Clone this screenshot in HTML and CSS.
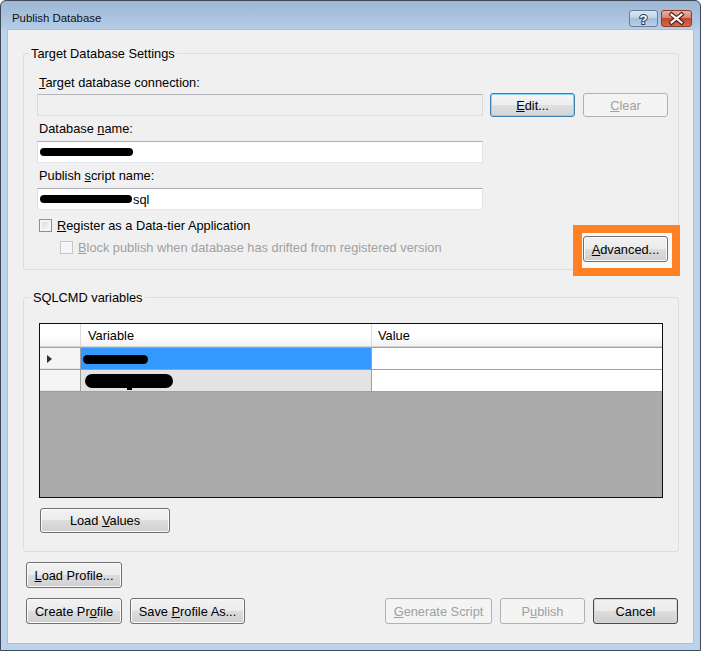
FILE: index.html
```html
<!DOCTYPE html>
<html>
<head>
<meta charset="utf-8">
<title>Publish Database</title>
<link rel="stylesheet" href="styles.css">
</head>
<body>
<div class="window">
  <div class="titlebar">
    <span class="title">Publish Database</span>
    <div class="caption-btns">
      <div class="cbtn help">
        <svg width="29" height="17" viewBox="0 0 29 17"><text x="14.5" y="13.5" text-anchor="middle" font-family="Liberation Sans, Arial, sans-serif" font-weight="bold" font-size="13" fill="#ffffff" stroke="#2c3e5a" stroke-width="2" paint-order="stroke">?</text></svg>
      </div>
      <div class="cbtn close">
        <svg width="31" height="17" viewBox="0 0 31 17"><path d="M10.5 4.5 L20.5 12.5 M20.5 4.5 L10.5 12.5" stroke="#4a1c14" stroke-width="4.2" stroke-linecap="square" fill="none"/><path d="M10.5 4.5 L20.5 12.5 M20.5 4.5 L10.5 12.5" stroke="#ffffff" stroke-width="2.2" stroke-linecap="square" fill="none"/></svg>
      </div>
    </div>
  </div>
  <div class="frame">
    <div class="client">
      <fieldset class="group group-target">
        <legend>Target Database Settings</legend>
        <div class="label"><u>T</u>arget database connection:</div>
        <div class="conn-row">
          <div class="tb tb-conn disabled"></div>
          <div class="btn btn-focus btn-edit"><span><u>E</u>dit...</span></div>
          <div class="btn btn-disabled btn-clear"><span><u>C</u>lear</span></div>
        </div>
        <div class="label label-gap">Database <u>n</u>ame:</div>
        <div class="tb tb-full"><span class="blob blob-db"></span></div>
        <div class="label label-gap2">Publish <u>s</u>cript name:</div>
        <div class="tb tb-full"><span class="blob blob-script"></span><span class="tb-text">sql</span></div>
        <div class="check-row">
          <span class="cb"></span><span><u>R</u>egister as a Data-tier Application</span>
        </div>
        <div class="adv-row">
          <div class="check-row check-sub">
            <span class="cb cb-disabled"></span><span class="disabled-text"><u>B</u>lock publish when database has drifted from registered version</span>
          </div>
          <div class="adv-wrap">
            <div class="highlight"></div>
            <div class="btn btn-adv"><span><u>A</u>dvanced...</span></div>
          </div>
        </div>
      </fieldset>

      <fieldset class="group group-sqlcmd">
        <legend>SQLCMD variables</legend>
        <div class="grid">
          <div class="grow ghead">
            <div class="gc rh"></div>
            <div class="gc c-var">Variable</div>
            <div class="gc c-val">Value</div>
          </div>
          <div class="grow gdata first">
            <div class="gc rh"><span class="rowmark"></span></div>
            <div class="gc c-var sel"><span class="blob blob-r1"></span></div>
            <div class="gc c-val"></div>
          </div>
          <div class="grow gdata">
            <div class="gc rh"></div>
            <div class="gc c-var alt"><span class="blob blob-r2"></span><span class="blob-dash"></span></div>
            <div class="gc c-val"></div>
          </div>
        </div>
        <div class="btn btn-load"><span>Load <u>V</u>alues</span></div>
      </fieldset>

      <div class="btn btn-loadprofile"><span><u>L</u>oad Profile...</span></div>
      <div class="bottom-row">
        <div class="btn btn-create"><span>Create Pr<u>o</u>file</span></div>
        <div class="btn btn-save"><span>Save <u>P</u>rofile As...</span></div>
        <div class="spacer"></div>
        <div class="btn btn-disabled btn-generate"><span><u>G</u>enerate Script</span></div>
        <div class="btn btn-disabled btn-publish"><span>P<u>u</u>blish</span></div>
        <div class="btn btn-default btn-cancel"><span>Cancel</span></div>
      </div>
    </div>
  </div>
</div>
</body>
</html>
```
FILE: styles.css
```css
* { box-sizing: border-box; }
html, body { margin: 0; padding: 0; background: #ffffff; }
body {
  font-family: "Liberation Sans", Arial, sans-serif;
  font-size: 12.8px;
  line-height: 15px;
  color: #000000;
}
u { text-decoration: underline; text-underline-offset: 1px; }

.window {
  width: 701px;
  height: 651px;
  border: 1px solid #3e4856;
  border-radius: 6px 6px 0 0;
  background: linear-gradient(#9db6d3 0px, #b3cbe5 26px, #bcd3ec 30px, #bcd3ec 100%);
  display: flex;
  flex-direction: column;
}

.titlebar {
  height: 29px;
  flex: none;
  display: flex;
  align-items: center;
  padding: 5px 8px 0 11px;
}
.title { font-size: 11.4px; color: #0f0f1a; }
.caption-btns { margin-left: auto; display: flex; gap: 3px; }
.cbtn {
  height: 17px;
  border-radius: 3px;
  display: flex;
}
.help {
  width: 29px;
  border: 1px solid #6b7f9c;
  background: linear-gradient(#dbe6f3 0%, #c3d4e8 45%, #a8bedb 50%, #b9cee6 100%);
}
.help svg, .close svg { margin: -1px; }
.close {
  width: 31px;
  border: 1px solid #8d3a2e;
  background: linear-gradient(#eab0a3 0%, #d98573 45%, #c5472f 50%, #d46a4a 100%);
}

.frame {
  flex: 1;
  display: flex;
  padding: 0 7px 7px 7px;
}
.client {
  flex: 1;
  background: #f0f0f0;
  box-shadow: 0 0 0 1px #a9bfd8;
  padding: 16px 14px 0 15px;
  display: flex;
  flex-direction: column;
}

.group {
  margin: 0;
  border: 1px solid #d5dfe5;
  border-radius: 3px;
  min-width: 0;
}
.group legend {
  padding: 0 2px;
  margin-left: -8px;
  line-height: 15px;
}
.group-target { padding: 14px 10px 7px 13px; }
.group-sqlcmd { margin-top: 20px; padding: 18px 15px 18px 15px; }

.label { margin-left: 2px; height: 15px; }
.label-gap { margin-top: 4px; }
.label-gap2 { margin-top: 5px; }

.conn-row {
  margin-top: 3px;
  height: 24px;
  display: flex;
  align-items: center;
}

.tb {
  height: 22px;
  border: 1px solid;
  border-color: #abadb3 #e2e3ea #e3e9ef #dbdfe6;
  background: #ffffff;
  display: flex;
  align-items: center;
  padding-left: 2px;
}
.tb.disabled {
  background: #f0f0f0;
  border-color: #b4b6bb #d9d9d9 #dedede #d9d9d9;
}
.tb-conn { width: 446px; }
.tb-full { width: 446px; margin-top: 5px; }
.tb-text { margin-left: 1px; }

.blob { display: inline-block; background: #000000; }
.blob-db { width: 93px; height: 8px; border-radius: 4px; }
.blob-script { width: 92px; height: 8px; border-radius: 4px; }

.btn {
  height: 25px;
  border: 1px solid #707070;
  border-radius: 3px;
  background: linear-gradient(#f2f2f2 0%, #ebebeb 50%, #dddddd 50%, #cfcfcf 100%);
  box-shadow: inset 0 0 0 1px #fbfbfb;
  display: flex;
  align-items: center;
  justify-content: center;
  flex: none;
  white-space: nowrap;
}
.btn-focus {
  border-color: #3c7fb1;
  box-shadow: inset 0 0 0 1px #7fd6fb;
  background: linear-gradient(#f4f4f4 0%, #ededed 50%, #e0e0e0 50%, #d4d4d4 100%);
}
.btn-disabled {
  border-color: #adb2b5;
  background: #f4f4f4;
  box-shadow: none;
  color: #a0a0a0;
}
.btn-default {
  border-color: #4a4a4a;
  box-shadow: inset 0 0 0 1px #d8d8d8;
}
.btn-edit { width: 85px; height: 24px; margin-left: 7px; }
.btn-clear { width: 85px; height: 24px; margin-left: 8px; }

.check-row {
  margin-top: 8px;
  height: 15px;
  display: flex;
  align-items: center;
  gap: 5px;
  padding-left: 2px;
}
.cb {
  width: 13px;
  height: 13px;
  flex: none;
  border: 1px solid #8e8f8f;
  background: linear-gradient(135deg, #d3d3d3 0%, #f2f2f2 70%, #ffffff 100%);
  box-shadow: inset 0 0 0 2px #f4f4f4;
}
.cb-disabled {
  border-color: #c6c6c6;
  background: #f4f4f4;
  box-shadow: inset 0 0 0 2px #f7f7f7;
}
.disabled-text { color: #a0a0a0; }

.adv-row {
  margin-top: 3px;
  display: flex;
  justify-content: space-between;
  align-items: flex-start;
}
.check-sub { margin-top: 4px; padding-left: 23px; }

.adv-wrap { position: relative; }
.highlight {
  position: absolute;
  left: -10px;
  top: -11px;
  right: -12px;
  bottom: -14px;
  border-style: solid;
  border-color: #ff8124;
  border-width: 8px 8px 8px 9px;
  background: #f9f9f9;
}
.btn-adv { position: relative; width: 85px; height: 26px; }

.grid {
  height: 175px;
  border: 1px solid #101010;
  background: #ababab;
}
.grow { display: flex; }
.gc { flex: none; }
.rh { width: 41px; }
.c-var { width: 291px; }
.c-val { flex: 1; }

.ghead {
  height: 23px;
  background: linear-gradient(#ffffff 0%, #ffffff 55%, #f1f2f4 100%);
  border-bottom: 1px solid #d5d5d5;
}
.ghead .gc {
  border-right: 1px solid #dcdcdc;
  display: flex;
  align-items: center;
}
.ghead .c-var { padding-left: 7px; }
.ghead .c-val { padding-left: 6px; border-right: none; }

.gdata { height: 22px; border-bottom: 1px solid #a0a0a0; }
.gdata.first { height: 23px; border-top: 1px solid #a0a0a0; }
.gdata .gc { display: flex; align-items: center; }
.gdata .rh {
  background: #f5f5f5;
  border-right: 1px solid #a0a0a0;
  box-shadow: inset 0 -1px 0 #e4e4e4;
  padding-left: 7px;
}
.gdata .c-var { border-right: 1px solid #a0a0a0; padding-left: 2px; position: relative; }
.gdata .c-val { background: #ffffff; }
.sel { background: #3399ff; }
.alt { background: #e3e3e3; }

.rowmark {
  width: 0;
  height: 0;
  border-top: 4px solid transparent;
  border-bottom: 4px solid transparent;
  border-left: 5px solid #303030;
  margin-top: 1px;
}
.blob-r1 { width: 65px; height: 9px; border-radius: 5px; margin-top: 1px; }
.blob-r2 { width: 88px; height: 14px; border-radius: 7px; margin-left: 2px; }
.blob-dash {
  position: absolute;
  left: 46px;
  bottom: 1px;
  width: 5px;
  height: 2px;
  background: #000000;
}

.btn-load { width: 130px; margin-top: 10px; margin-left: 1px; }

.btn-loadprofile { width: 96px; height: 26px; margin-top: 10px; margin-left: 3px; }
.bottom-row {
  margin-top: 10px;
  margin-left: 3px;
  margin-right: 1px;
  display: flex;
  gap: 8px;
}
.bottom-row .btn { height: 26px; }
.spacer { flex: 1; }
.btn-create { width: 96px; }
.btn-save { width: 115px; }
.btn-generate { width: 107px; }
.btn-publish { width: 85px; }
.btn-cancel { width: 85px; }
```
